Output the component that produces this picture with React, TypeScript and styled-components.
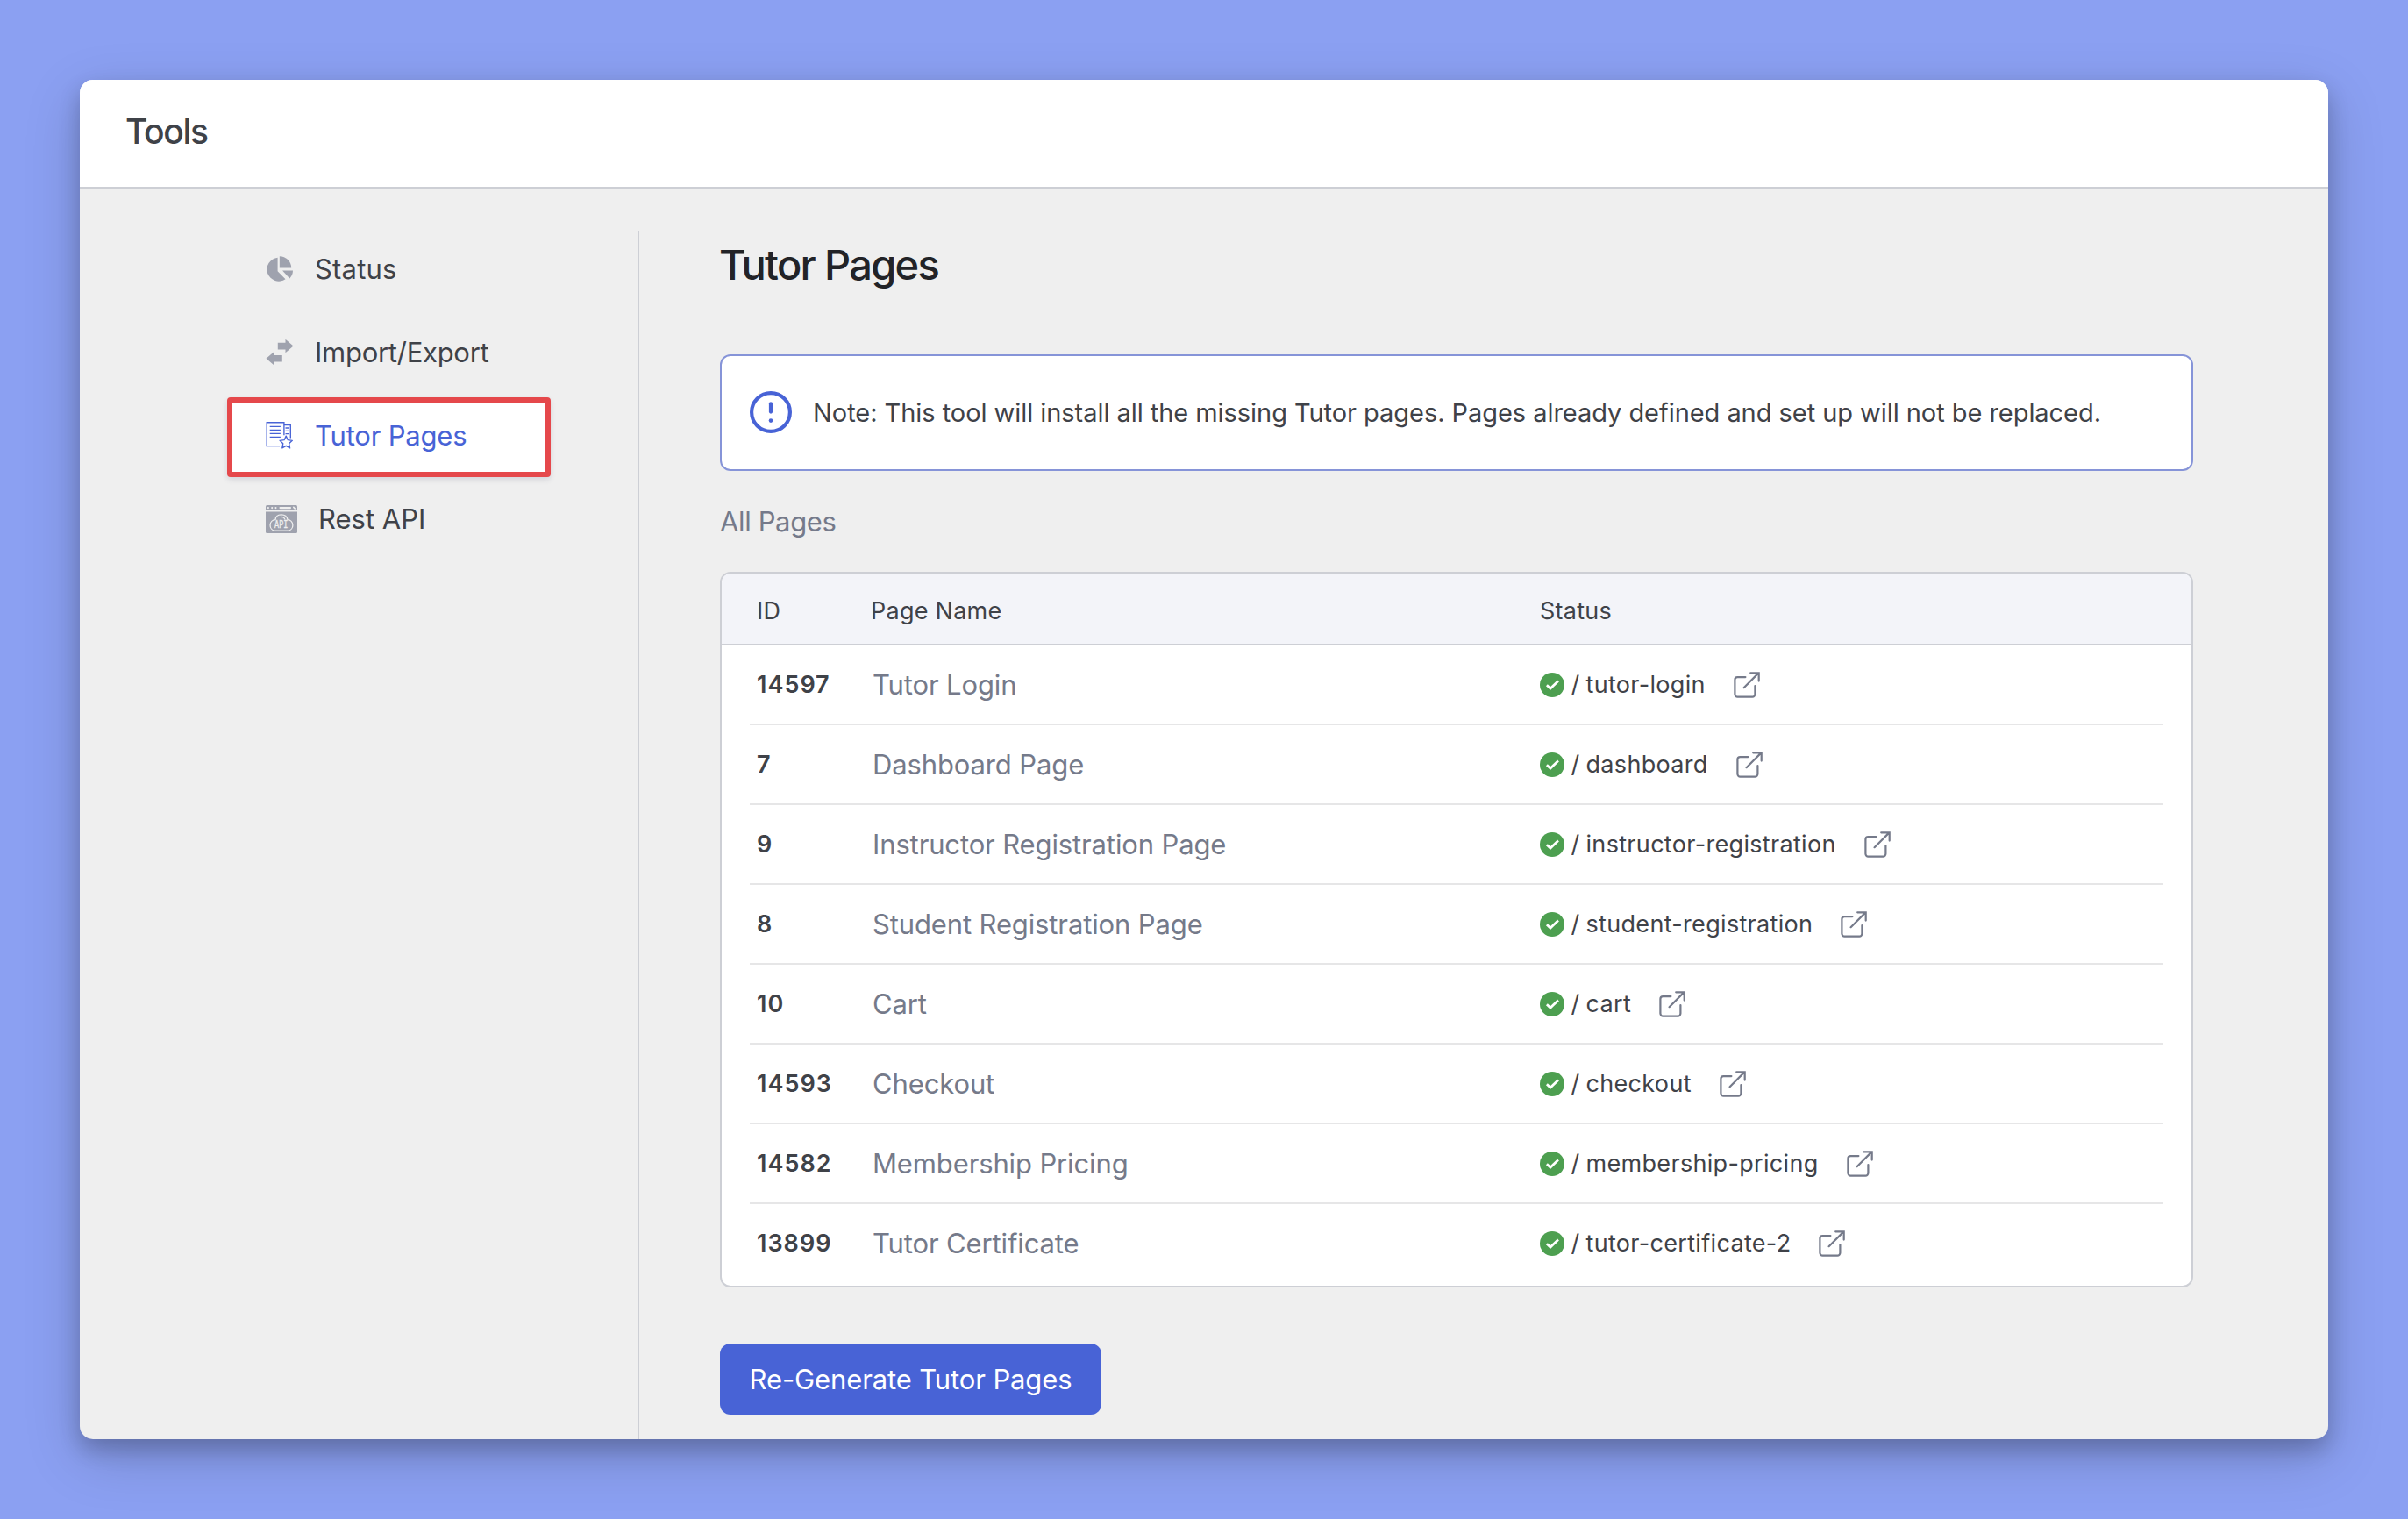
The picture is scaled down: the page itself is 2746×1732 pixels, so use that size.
import React from 'react';
import styled, { createGlobalStyle, css } from 'styled-components';

const color = {
  backdrop: '#8ba0f2',
  surface: '#efefef',
  white: '#ffffff',
  primary: '#4863d6',
  heading: '#222327',
  text: '#3f4248',
  muted: '#757a8a',
  icon: '#9fa2ae',
  border: '#cdcfd5',
  rule: '#e6e6e7',
  tableHead: '#f3f4f9',
  noteBorder: '#8694d8',
  highlight: '#e5484b',
  success: '#4d9f50',
};

const GlobalStyle = createGlobalStyle`
  *, *::before, *::after { box-sizing: border-box; }
  body {
    margin: 0;
    background: ${color.backdrop};
    color: ${color.text};
    font-family: Inter, "Liberation Sans", sans-serif;
  }
`;

const Backdrop = styled.div`
  min-height: 1732px;
  padding: 91px;
`;

const Window = styled.div`
  display: flex;
  flex-direction: column;
  height: 1550px;
  overflow: hidden;
  border-radius: 15px;
  background: ${color.surface};
  box-shadow: 0 12px 24px rgba(0, 0, 0, 0.2), 0 20px 64px rgba(0, 0, 0, 0.18);
`;

const Header = styled.header`
  display: flex;
  align-items: center;
  flex: none;
  height: 124px;
  padding: 0 53px 4px 52px;
  border-bottom: 2px solid ${color.border};
  background: ${color.white};
`;

const HeaderTitle = styled.h1`
  margin: 0;
  font-size: 39px;
  font-weight: 500;
  line-height: 48px;
  letter-spacing: -1.34px;
`;

const Body = styled.div`
  display: flex;
  flex: 1;
  padding-top: 48px;
`;

const Sidebar = styled.nav`
  display: flex;
  flex-direction: column;
  gap: 4px;
  flex: none;
  width: 638px;
  padding: 0 99px 0 168px;
  border-right: 2px solid ${color.border};
`;

const NavItem = styled.a<{ $active?: boolean }>`
  display: flex;
  align-items: center;
  gap: 24px;
  height: 91px;
  padding: 0 0 4px 38px;
  border: 6px solid transparent;
  border-radius: 4px;
  color: ${color.icon};

  ${({ $active }) =>
    $active &&
    css`
      border-color: ${color.highlight};
      background: ${color.white};
      color: ${color.primary};
      box-shadow: 0 3px 6px rgba(60, 60, 90, 0.14);
    `}

  &:last-child {
    padding-bottom: 3px;
  }

  svg {
    flex: none;
  }
`;

const NavLabel = styled.span<{ $active?: boolean; $track: number }>`
  color: ${({ $active }) => ($active ? color.primary : color.text)};
  font-size: 31px;
  line-height: 40px;
  letter-spacing: ${({ $track }) => $track}px;
`;

const Content = styled.main`
  flex: none;
  width: 1772px;
  padding-left: 92px;
`;

const PageTitle = styled.h2`
  margin: 0 0 63px -1px;
  color: ${color.heading};
  font-size: 47px;
  font-weight: 500;
  line-height: 78px;
  letter-spacing: -1.7px;
`;

const Note = styled.div`
  display: flex;
  align-items: center;
  gap: 24px;
  height: 133px;
  padding: 0 32px;
  border: 2px solid ${color.noteBorder};
  border-radius: 12px;
  background: ${color.white};
  color: ${color.text};
  font-size: 29px;
  line-height: 40px;
  letter-spacing: -0.05px;
  white-space: nowrap;

  svg {
    margin-bottom: 1px;
  }
`;

const SectionLabel = styled.div`
  color: ${color.muted};
  font-size: 31px;
  line-height: 115px;
  letter-spacing: -0.36px;
`;

const Table = styled.div`
  overflow: hidden;
  border: 2px solid ${color.border};
  border-radius: 12px;
  background: ${color.white};
`;

const TableHead = styled.div`
  display: grid;
  grid-template-columns: 130px 763px 1fr;
  align-items: center;
  height: 82px;
  padding: 4px 39px 0 40px;
  border-bottom: 2px solid ${color.border};
  background: ${color.tableHead};
  font-size: 27px;
  letter-spacing: 0.25px;
`;

const TableBody = styled.div`
  padding: 0 32px 2px;
`;

const Row = styled.div`
  display: grid;
  grid-template-columns: 132px 761px 1fr;
  align-items: center;
  height: 91px;
  padding-left: 8px;
  border-bottom: 2px solid ${color.rule};

  &:last-child {
    border-bottom-color: transparent;
  }
`;

const PageId = styled.span`
  font-size: 27px;
  font-weight: 600;
  letter-spacing: 1px;
`;

const PageName = styled.span`
  color: ${color.muted};
  font-size: 31px;
  line-height: 40px;
  letter-spacing: -0.13px;
`;

const StatusCell = styled.span`
  display: flex;
  align-items: center;
  font-size: 27px;
  line-height: 36px;
  letter-spacing: 0.32px;
`;

const Slash = styled.span`
  width: 17px;
  margin-left: 7.5px;
`;

const Slug = styled.span`
  margin-right: 32px;
`;

const Button = styled.button`
  display: block;
  width: 435px;
  height: 81px;
  margin-top: 64px;
  padding: 0;
  border: 0;
  border-radius: 12px;
  background: ${color.primary};
  color: ${color.white};
  font: 400 31px/40px Inter, "Liberation Sans", sans-serif;
  letter-spacing: -0.12px;
`;

const StatusIcon = () => (
  <svg width="32" height="30" viewBox="-0.5 0 32 30" fill="currentColor">
    <path d="M13.1 1.7A13.5 13.5 0 1 0 22 26.3L13.1 17.2Z" />
    <path d="M15.3 0.2V13.5H28.7A13.4 13.4 0 0 0 15.3 0.2Z" />
    <path d="M18.6 16.5H30.5A13 13 0 0 1 26.8 25.4Z" />
  </svg>
);

const ImportExportIcon = () => (
  <svg width="32" height="31" viewBox="-0.5 -0.5 32 31" fill="currentColor">
    <path d="M13.3 4.3H22V0.3L31 8L22 15.8V12H13.3Z" />
    <path d="M18.3 18.4H9.1V14.4L0 22.2L9.1 30V26H18.3Z" />
  </svg>
);

const PagesIcon = () => (
  <svg width="32" height="32" viewBox="-0.5 0 32 32" fill="none" stroke="currentColor" strokeWidth="1.35">
    <path d="M15.5 27.6H0.7V0.7H20.4V15.2" />
    <path d="M4.2 5.3H16.4M4.2 9.3H16.4M4.2 13.3H16.4M4.2 17.3H16.4" />
    <path d="M20.4 3.6H27.8V18.5M22 7H26.4M22 10.3H26.4M22 13.6H26.4" />
    <path
      d="M22.7 16.1L24.8 20.7L29.8 21.3L26.1 24.7L27.1 29.9L22.7 27.3L18.3 29.9L19.3 24.7L15.6 21.3L20.6 20.7Z"
      strokeLinejoin="round"
    />
  </svg>
);

const ApiIcon = () => (
  <svg width="36" height="32" viewBox="0 0 36 32">
    <path d="M1.5 0H34.5Q36 0 36 1.5V6H0V1.5Q0 0 1.5 0Z" fill="currentColor" />
    <path d="M0 7.4H36V30.5Q36 32 34.5 32H1.5Q0 32 0 30.5Z" fill="currentColor" />
    <g stroke={color.surface} fill="none" strokeLinecap="round">
      <path d="M2.9 3.1h0.01M7.2 3.1h0.01M11.5 3.1h0.01M16.5 3.1H28" strokeWidth="2.1" />
      <path d="M31.8 2.4L33.3 4" strokeWidth="1.6" />
      <path
        d="M10.3 29.2A6.3 6.3 0 0 1 11 16.7C11.2 12.9 14 10.8 17.8 10.8S24.4 13 25 16.7A6.3 6.3 0 0 1 25.6 29.2Z"
        strokeWidth="1.3"
      />
      <path d="M17.9 13.4Q20.8 13.5 21.8 16" strokeWidth="1.1" />
    </g>
    <text
      x="17.8"
      y="26.4"
      textAnchor="middle"
      textLength="15.4"
      lengthAdjust="spacingAndGlyphs"
      fill={color.surface}
      fontFamily="'Liberation Mono', monospace"
      fontSize="12.5"
      fontWeight="400"
      stroke={color.surface}
      strokeWidth="0.3"
    >
      API
    </text>
  </svg>
);

const InfoIcon = () => (
  <svg width="48" height="48" viewBox="0 0 48 48" fill="none" stroke={color.primary} strokeLinecap="round">
    <circle cx="24" cy="24" r="21.9" strokeWidth="4.2" />
    <path d="M24 14.3V23.6" strokeWidth="4.2" />
    <circle cx="24" cy="33.6" r="2.3" fill={color.primary} stroke="none" />
  </svg>
);

const CheckIcon = () => (
  <svg width="28" height="28" viewBox="0 0 28 28">
    <circle cx="14" cy="14" r="14" fill={color.success} />
    <path d="M7.9 14.2L12 18.1L21 9.6" fill="none" stroke={color.white} strokeWidth="2.7" />
  </svg>
);

const ExternalIcon = () => (
  <svg width="30" height="30" viewBox="0 0 30 30" fill="none" stroke={color.muted} strokeWidth="2.2" strokeLinecap="round">
    <path d="M13.4 6.1H4.4A3 3 0 0 0 1.4 9.1V25.6A3 3 0 0 0 4.4 28.6H21.4A3 3 0 0 0 24.4 25.6V16" />
    <path d="M11.6 18.2L28.4 1.4M19.2 1.3H28.7V10.6" />
  </svg>
);

const navItems = [
  { label: 'Status', Icon: StatusIcon, track: 0.19 },
  { label: 'Import/Export', Icon: ImportExportIcon, track: -0.27 },
  { label: 'Tutor Pages', Icon: PagesIcon, track: -0.2, active: true },
  { label: 'Rest API', Icon: ApiIcon, track: 0 },
];

const pages = [
  { id: '14597', name: 'Tutor Login', slug: 'tutor-login' },
  { id: '7', name: 'Dashboard Page', slug: 'dashboard' },
  { id: '9', name: 'Instructor Registration Page', slug: 'instructor-registration' },
  { id: '8', name: 'Student Registration Page', slug: 'student-registration' },
  { id: '10', name: 'Cart', slug: 'cart' },
  { id: '14593', name: 'Checkout', slug: 'checkout' },
  { id: '14582', name: 'Membership Pricing', slug: 'membership-pricing' },
  { id: '13899', name: 'Tutor Certificate', slug: 'tutor-certificate-2' },
];

export default function App() {
  return (
    <>
      <GlobalStyle />
      <Backdrop>
        <Window>
          <Header>
            <HeaderTitle>Tools</HeaderTitle>
          </Header>
          <Body>
            <Sidebar>
              {navItems.map(({ label, Icon, track, active }) => (
                <NavItem key={label} $active={active}>
                  <Icon />
                  <NavLabel $active={active} $track={track}>
                    {label}
                  </NavLabel>
                </NavItem>
              ))}
            </Sidebar>
            <Content>
              <PageTitle>Tutor Pages</PageTitle>
              <Note>
                <InfoIcon />
                <span>
                  Note: This tool will install all the missing Tutor pages. Pages already defined and set up will not be
                  replaced.
                </span>
              </Note>
              <SectionLabel>All Pages</SectionLabel>
              <Table>
                <TableHead>
                  <span>ID</span>
                  <span>Page Name</span>
                  <span>Status</span>
                </TableHead>
                <TableBody>
                  {pages.map(({ id, name, slug }) => (
                    <Row key={id}>
                      <PageId>{id}</PageId>
                      <PageName>{name}</PageName>
                      <StatusCell>
                        <CheckIcon />
                        <Slash>/</Slash>
                        <Slug>{slug}</Slug>
                        <ExternalIcon />
                      </StatusCell>
                    </Row>
                  ))}
                </TableBody>
              </Table>
              <Button type="button">Re-Generate Tutor Pages</Button>
            </Content>
          </Body>
        </Window>
      </Backdrop>
    </>
  );
}
